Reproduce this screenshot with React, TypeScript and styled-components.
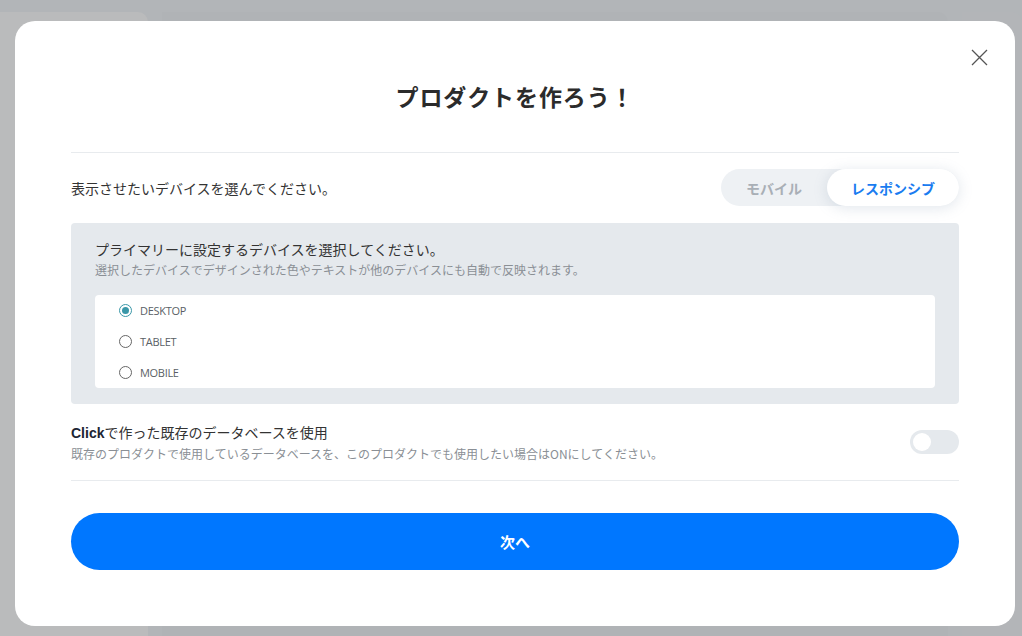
import styled, { createGlobalStyle } from 'styled-components'
import { useState } from 'react'

const GlobalStyle = createGlobalStyle`
  html, body {
    margin: 0;
    padding: 0;
    width: 1022px;
    height: 636px;
    overflow: hidden;
    font-family: "Noto Sans CJK JP", "Noto Sans", sans-serif;
  }
  * { box-sizing: border-box; }
`

const Backdrop = styled.div`
  width: 1022px;
  height: 636px;
  background: #b2b5b8;
  display: grid;
  grid-template-columns: 148px 1fr 60px;
  gap: 14px;
  padding: 12px 0 0;
`

const GhostCard = styled.div<{ $tone: string }>`
  background: ${p => p.$tone};
  border-radius: 0 10px 0 0;
`

const Modal = styled.div`
  position: fixed;
  left: 15px;
  top: 21px;
  width: 1000px;
  height: 605px;
  background: #fff;
  border-radius: 20px;
  padding: 0 56px;
  display: flex;
  flex-direction: column;
`

const CloseButton = styled.button`
  position: absolute;
  right: 26px;
  top: 26px;
  width: 20px;
  height: 20px;
  padding: 0;
  border: none;
  background: transparent;
  cursor: pointer;
  display: flex;
  align-items: center;
  justify-content: center;
`

const Header = styled.div`
  padding: 59px 0 40px;
  border-bottom: 1px solid #e8ebee;
  text-align: center;
`

const Title = styled.h2`
  margin: 0;
  font-size: 23px;
  line-height: 32px;
  font-weight: 700;
  color: #2b2b2b;
  letter-spacing: 0.9px;
`

const DeviceRow = styled.div`
  display: flex;
  align-items: center;
  justify-content: space-between;
  margin-top: 16px;
  height: 37px;
`

const Label = styled.span`
  font-size: 14px;
  color: #333;
`

const Segmented = styled.div`
  display: flex;
  width: 238px;
  height: 37px;
  background: #eef1f4;
  border-radius: 19px;
`

const Segment = styled.button<{ $active: boolean; $w: number }>`
  width: ${p => p.$w}px;
  height: 37px;
  border: none;
  border-radius: 19px;
  font-family: inherit;
  font-size: 14px;
  font-weight: 700;
  cursor: pointer;
  background: ${p => (p.$active ? '#fff' : 'transparent')};
  color: ${p => (p.$active ? '#1a7cf0' : '#a9afb6')};
  box-shadow: ${p => (p.$active ? '0 2px 14px rgba(120, 140, 170, 0.22)' : 'none')};
`

const PrimaryBox = styled.div`
  margin-top: 17px;
  background: #e5e9ed;
  border-radius: 4px;
  padding: 16px 24px 16px;
`

const BoxHeading = styled.div`
  font-size: 14px;
  line-height: 20px;
  color: #333;
`

const Sub = styled.div`
  margin-top: 3px;
  font-size: 12px;
  line-height: 16px;
  color: #8a8f95;
`

const RadioList = styled.div`
  margin-top: 17px;
  background: #fff;
  border-radius: 4px;
  padding: 0 24px;
`

const RadioItem = styled.label`
  display: flex;
  align-items: center;
  gap: 8px;
  height: 31px;
  cursor: pointer;
  font-family: "Open Sans", "Noto Sans", sans-serif;
  font-size: 11px;
  letter-spacing: -0.3px;
  color: #5a5f66;
`

const RadioCircle = styled.span<{ $checked: boolean }>`
  width: 13px;
  height: 13px;
  border-radius: 50%;
  border: 1px solid ${p => (p.$checked ? '#3a97a8' : '#666')};
  display: flex;
  align-items: center;
  justify-content: center;
  &::after {
    content: '';
    width: 7px;
    height: 7px;
    border-radius: 50%;
    background: ${p => (p.$checked ? '#3a97a8' : 'transparent')};
  }
`

const DbSection = styled.div`
  margin-top: 18px;
  padding-bottom: 18px;
  border-bottom: 1px solid #e8ebee;
  display: flex;
  align-items: center;
  justify-content: space-between;
`

const DbTitle = styled.div`
  font-size: 14px;
  line-height: 20px;
  color: #333;
  b {
    font-family: "Liberation Sans", Arial, sans-serif;
    color: #1c2533;
    font-weight: 700;
  }
`

const DbSub = styled(Sub)`
  margin-top: 3px;
`

const Switch = styled.button<{ $on: boolean }>`
  width: 49px;
  height: 24px;
  border: none;
  border-radius: 12px;
  padding: 3px;
  background: ${p => (p.$on ? '#0077ff' : '#e5e9ed')};
  display: flex;
  justify-content: ${p => (p.$on ? 'flex-end' : 'flex-start')};
  cursor: pointer;
  &::after {
    content: '';
    width: 18px;
    height: 18px;
    border-radius: 50%;
    background: #fff;
  }
`

const NextButton = styled.button`
  margin-top: 32px;
  height: 57px;
  width: 100%;
  border: none;
  border-radius: 29px;
  background: #0077ff;
  color: #fff;
  font-family: inherit;
  font-size: 15px;
  font-weight: 700;
  cursor: pointer;
`

const devices = ['DESKTOP', 'TABLET', 'MOBILE']

export default function App() {
  const [mode, setMode] = useState<'mobile' | 'responsive'>('responsive')
  const [device, setDevice] = useState('DESKTOP')
  const [useDb, setUseDb] = useState(false)

  return (
    <>
      <GlobalStyle />
      <Backdrop>
        <GhostCard $tone="#babbbc" />
        <GhostCard $tone="#b0b3b6" />
        <GhostCard $tone="#b3b5b8" />
      </Backdrop>
      <Modal>
        <CloseButton aria-label="close">
          <svg width="17" height="17" viewBox="0 0 17 17">
            <path d="M1 1 L16 16 M16 1 L1 16" stroke="#555" strokeWidth="1.3" fill="none" />
          </svg>
        </CloseButton>
        <Header>
          <Title>プロダクトを作ろう！</Title>
        </Header>

        <DeviceRow>
          <Label>表示させたいデバイスを選んでください。</Label>
          <Segmented>
            <Segment $w={106} $active={mode === 'mobile'} onClick={() => setMode('mobile')}>
              モバイル
            </Segment>
            <Segment $w={132} $active={mode === 'responsive'} onClick={() => setMode('responsive')}>
              レスポンシブ
            </Segment>
          </Segmented>
        </DeviceRow>

        <PrimaryBox>
          <BoxHeading>プライマリーに設定するデバイスを選択してください。</BoxHeading>
          <Sub>選択したデバイスでデザインされた色やテキストが他のデバイスにも自動で反映されます。</Sub>
          <RadioList>
            {devices.map(d => (
              <RadioItem key={d} onClick={() => setDevice(d)}>
                <RadioCircle $checked={device === d} />
                {d}
              </RadioItem>
            ))}
          </RadioList>
        </PrimaryBox>

        <DbSection>
          <div>
            <DbTitle>
              <b>Click</b>で作った既存のデータベースを使用
            </DbTitle>
            <DbSub>既存のプロダクトで使用しているデータベースを、このプロダクトでも使用したい場合はONにしてください。</DbSub>
          </div>
          <Switch $on={useDb} onClick={() => setUseDb(!useDb)} aria-label="toggle" />
        </DbSection>

        <NextButton>次へ</NextButton>
      </Modal>
    </>
  )
}
